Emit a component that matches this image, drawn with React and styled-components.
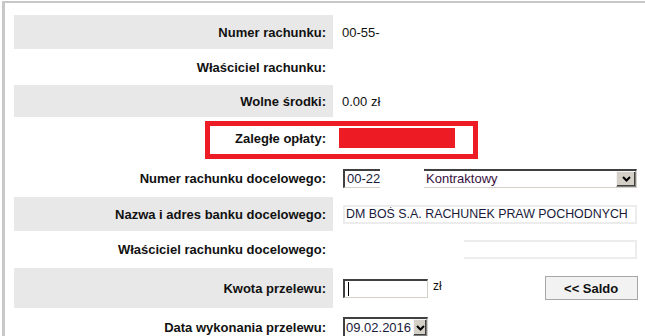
import React from "react";
import styled, { createGlobalStyle } from "styled-components";

const GlobalStyle = createGlobalStyle`
  html, body { margin: 0; padding: 0; background: #fff; }
  body { font-family: "Liberation Sans", Arial, sans-serif; font-size: 12px; color: #000; overflow: hidden; }
`;

const Frame = styled.div`
  margin: 1px 0 0 2px;
  border-top: 2px solid #c8c8c8;
  border-left: 3px solid #c8c8c8;
  padding: 12px 0 0 9px;
  height: 400px;
`;

const Form = styled.div`
  display: flex;
  flex-direction: column;
`;

const Row = styled.div`
  position: relative;
  display: grid;
  grid-template-columns: 319px 1fr;
  height: ${(p) => p.$h}px;
`;

const Label = styled.div`
  display: flex;
  align-items: center;
  justify-content: flex-end;
  padding-right: 7px;
  background: ${(p) => (p.$shade ? "#e8e8e8" : "transparent")};
  font-weight: bold;
  font-size: 13px;
  color: #111;
  white-space: nowrap;
`;

const Value = styled.div`
  display: flex;
  align-items: center;
  padding-left: ${(p) => (p.$pad ?? 9)}px;
  font-size: 13px;
  color: #111;
  white-space: nowrap;
`;

const Annotation = styled.div`
  position: absolute;
  left: 191px;
  top: 4px;
  width: 273px;
  height: 38px;
  box-sizing: border-box;
  border: 5px solid #ed1c24;
  pointer-events: none;
`;

const Redact = styled.span`
  display: inline-block;
  width: 116px;
  height: 20px;
  background: #ed1c24;
`;

const InsetField = styled.div`
  box-sizing: border-box;
  width: ${(p) => p.$w}px;
  height: ${(p) => p.$hh ?? 19}px;
  border-top: 2px solid #404040;
  border-left: 2px solid #404040;
  border-bottom: 1px solid #d4d0c8;
  border-right: ${(p) => (p.$openRight ? "none" : "1px solid #d4d0c8")};
  display: flex;
  align-items: center;
  padding-left: 2px;
  font-size: 13px;
  color: #1a1a3a;
  overflow: hidden;
  background: #fff;
`;

const Select = styled.div`
  box-sizing: border-box;
  width: ${(p) => p.$w}px;
  height: ${(p) => p.$hh}px;
  border-top: 2px solid #404040;
  border-left: ${(p) => (p.$noLeft ? "none" : "2px solid #404040")};
  border-bottom: 1px solid #d4d0c8;
  border-right: 1px solid #d4d0c8;
  display: flex;
  align-items: stretch;
  background: #fff;
`;

const SelectText = styled.div`
  flex: 1;
  display: flex;
  align-items: center;
  padding-left: ${(p) => p.$pl ?? 2}px;
  font-size: 13px;
  color: ${(p) => p.$color || "#1a1a3a"};
  overflow: hidden;
  white-space: nowrap;
`;

const ArrowBox = styled.div`
  width: ${(p) => p.$w}px;
  flex: none;
  box-sizing: border-box;
  background: #d4d0c8;
  border: 1px solid #808080;
  border-top-color: #f4f4f4;
  border-left-color: #f4f4f4;
  box-shadow: inset -1px -1px 0 #404040;
  display: flex;
  align-items: center;
  justify-content: center;
`;

const Chevron = () => (
  <svg width="9" height="6" viewBox="0 0 9 6">
    <path d="M1 1 L4.5 4.5 L8 1" fill="none" stroke="#000" strokeWidth="2" />
  </svg>
);

const Gap = styled.span`
  display: inline-block;
  flex: none;
  width: ${(p) => p.$w}px;
`;

const PlainField = styled.div`
  box-sizing: border-box;
  width: ${(p) => p.$w}px;
  height: ${(p) => p.$hh}px;
  margin-left: ${(p) => p.$ml ?? 0}px;
  border: 2px solid #ececec;
  border-left: ${(p) => (p.$openLeft ? "none" : "2px solid #ececec")};
  display: flex;
  align-items: center;
  padding-left: 1px;
  font-size: 12.4px;
  color: #1a1a3a;
  background: #fff;
  overflow: hidden;
  white-space: nowrap;
`;

const Caret = styled.span`
  display: inline-block;
  width: 1px;
  height: 14px;
  background: #000;
  margin-left: 1px;
`;

const Unit = styled.span`
  margin-left: 5px;
  margin-top: -5px;
  font-size: 12px;
`;

const SaldoButton = styled.button`
  margin-left: 103px;
  width: 93px;
  height: 24px;
  box-sizing: border-box;
  background: #f2f2f2;
  border: 1px solid #a6a6a6;
  font-family: "Liberation Sans", Arial, sans-serif;
  font-weight: bold;
  font-size: 13px;
  color: #111;
  padding: 0;
`;

export default function App() {
  return (
    <>
      <GlobalStyle />
      <Frame>
        <Form>
          <Row $h={34}>
            <Label $shade>Numer rachunku:</Label>
            <Value>00-55-</Value>
          </Row>
          <Row $h={36}>
            <Label>Właściciel rachunku:</Label>
            <Value />
          </Row>
          <Row $h={32}>
            <Label $shade>Wolne środki:</Label>
            <Value>0.00 zł</Value>
          </Row>
          <Row $h={42}>
            <Label>Zaległe opłaty:</Label>
            <Value $pad={6}>
              <Redact />
            </Value>
            <Annotation />
          </Row>
          <Row $h={38}>
            <Label>Numer rachunku docelowego:</Label>
            <Value $pad={10}>
              <InsetField $w={37} $openRight>00-22</InsetField>
              <Gap $w={44} />
              <Select $w={213} $hh={19} $noLeft>
                <SelectText $color="#3a1040">Kontraktowy</SelectText>
                <ArrowBox $w={20}>
                  <Chevron />
                </ArrowBox>
              </Select>
            </Value>
          </Row>
          <Row $h={34}>
            <Label $shade>Nazwa i adres banku docelowego:</Label>
            <Value $pad={10}>
              <PlainField $w={294} $hh={19}>DM BOŚ S.A. RACHUNEK PRAW POCHODNYCH</PlainField>
            </Value>
          </Row>
          <Row $h={37}>
            <Label>Właściciel rachunku docelowego:</Label>
            <Value $pad={10}>
              <PlainField $w={173} $hh={19} $ml={121} $openLeft />
            </Value>
          </Row>
          <Row $h={40}>
            <Label $shade>Kwota przelewu:</Label>
            <Value $pad={10}>
              <InsetField $w={85} $hh={19}>
                <Caret />
              </InsetField>
              <Unit>zł</Unit>
              <SaldoButton>&lt;&lt; Saldo</SaldoButton>
            </Value>
          </Row>
          <Row $h={38}>
            <Label>Data wykonania przelewu:</Label>
            <Value $pad={10}>
              <Select $w={85} $hh={20}>
                <SelectText $pl={1}>09.02.2016</SelectText>
                <ArrowBox $w={14}>
                  <Chevron />
                </ArrowBox>
              </Select>
            </Value>
          </Row>
        </Form>
      </Frame>
    </>
  );
}
